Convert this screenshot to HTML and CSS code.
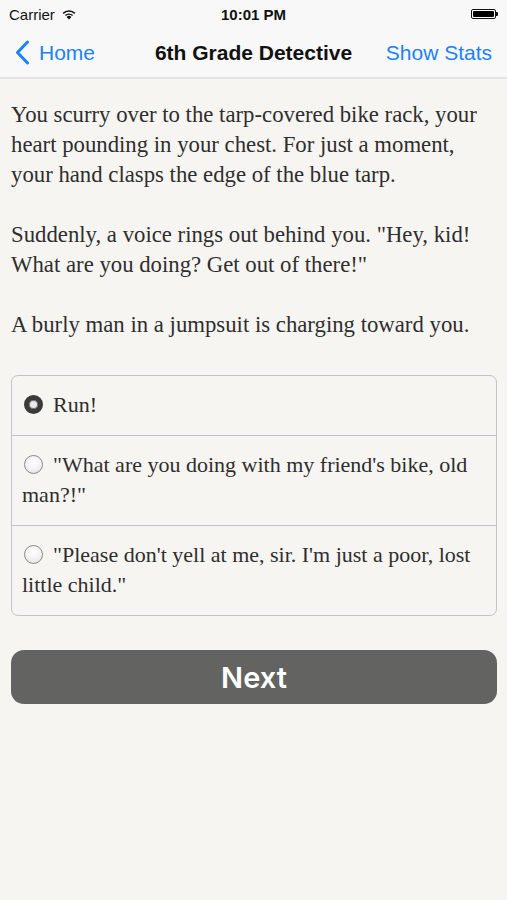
FILE: index.html
```html
<!DOCTYPE html>
<html>
<head>
<meta charset="utf-8">
<link rel="stylesheet" href="styles.css">
</head>
<body>
<div class="top">
  <div class="status">
    <div class="status-left">Carrier
      <svg class="wifi" width="16" height="12" viewBox="0 0 16 12"><path d="M8 11.5 L5.6 8.9 A3.4 3.4 0 0 1 10.4 8.9 Z" fill="#111"/><path d="M3.9 7.1 A5.8 5.8 0 0 1 12.1 7.1 L11.1 8.1 A4.4 4.4 0 0 0 4.9 8.1 Z" fill="#111"/><path d="M1.6 4.8 A9 9 0 0 1 14.4 4.8 L13.3 5.9 A7.5 7.5 0 0 0 2.7 5.9 Z" fill="#111"/></svg>
    </div>
    <div class="status-time">10:01 PM</div>
    <div class="status-right">
      <div class="battery"><div class="battery-fill"></div></div><div class="battery-tip"></div>
    </div>
  </div>
  <div class="nav">
    <div class="nav-back">
      <svg width="15" height="25" viewBox="0 0 15 25"><path d="M12.5 2 L2.5 12.5 L12.5 23" fill="none" stroke="#1a82fb" stroke-width="3" stroke-linecap="round" stroke-linejoin="round"/></svg>
      <span>Home</span>
    </div>
    <div class="nav-title">6th Grade Detective</div>
    <div class="nav-right">Show Stats</div>
  </div>
</div>
<div class="content">
  <p class="story">You scurry over to the tarp-covered bike rack, your heart pounding in your chest. For just a moment, your hand clasps the edge of the blue tarp.</p>
  <p class="story">Suddenly, a voice rings out behind you. "Hey, kid! What are you doing? Get out of there!"</p>
  <p class="story">A burly man in a jumpsuit is charging toward you.</p>
  <div class="choices">
    <div class="choice"><span class="radio checked"></span>Run!</div>
    <div class="choice"><span class="radio"></span>"What are you doing with my friend's bike, old man?!"</div>
    <div class="choice"><span class="radio"></span>"Please don't yell at me, sir. I'm just a poor, lost little child."</div>
  </div>
  <div class="next">Next</div>
</div>
</body>
</html>
```

FILE: styles.css
```css
html, body {
  margin: 0;
  padding: 0;
  background: #f7f5f2;
}
body {
  width: 507px;
  height: 900px;
  font-family: "Liberation Sans", Arial, sans-serif;
}
.top {
  background: #f8f8f8;
  border-bottom: 2px solid #e4e4e4;
}
.status {
  height: 28px;
  display: grid;
  grid-template-columns: 1fr auto 1fr;
  align-items: center;
  padding: 0 9px;
  font-size: 15px;
  color: #111;
}
.status-left {
  display: flex;
  align-items: center;
  gap: 6px;
}
.status-time {
  font-weight: bold;
  font-size: 15px;
}
.status-right {
  display: flex;
  justify-content: flex-end;
  align-items: center;
}
.battery {
  width: 25px;
  height: 10px;
  border: 1px solid #111;
  border-radius: 2px;
  padding: 1px;
  box-sizing: border-box;
  background: #fff;
}
.battery-fill {
  width: 100%;
  height: 100%;
  background: #000;
  border-radius: 1px;
}
.battery-tip {
  width: 2px;
  height: 4px;
  background: #111;
  border-radius: 0 1px 1px 0;
}
.nav {
  height: 49px;
  display: grid;
  grid-template-columns: 1fr auto 1fr;
  align-items: center;
  padding: 0 15px 0 15px;
  font-size: 21px;
}
.nav-back {
  display: flex;
  align-items: center;
  gap: 9px;
  color: #1a82fb;
}
.nav-title {
  font-weight: bold;
  color: #111;
  font-size: 21px;
}
.nav-right {
  color: #1a82fb;
  text-align: right;
}
.content {
  padding: 21px 10px 0 11px;
}
.story {
  margin: 0 0 30px 0;
  font-family: "Liberation Serif", "Times New Roman", serif;
  font-size: 22.75px;
  line-height: 30px;
  color: #2e2e2e;
}
.story:last-of-type {
  margin-bottom: 35px;
}
.choices {
  border: 1px solid #c4c4c4;
  border-radius: 7px;
  font-family: "Liberation Serif", "Times New Roman", serif;
  font-size: 22px;
  line-height: 30px;
  color: #2e2e2e;
}
.choice {
  padding: 14px 8px 15px 10px;
  border-top: 1px solid #c4c4c4;
}
.choice:first-child {
  border-top: none;
}
.radio {
  display: inline-block;
  width: 19px;
  height: 19px;
  border-radius: 50%;
  border: 1px solid #8a8a8a;
  background: radial-gradient(circle at 50% 35%, #ffffff 0%, #f0f0f0 60%, #d8d8d8 100%);
  vertical-align: -2px;
  margin: 0 10px 0 2px;
  box-sizing: border-box;
}
.radio.checked {
  border: 5px solid #3a3a3a;
  background: #eaeaea;
  box-shadow: inset 0 0 0 1px #777;
}
.next {
  margin-top: 34px;
  height: 54px;
  border-radius: 13px;
  background: #636361;
  color: #fff;
  font-family: Inter, "Liberation Sans", sans-serif;
  font-size: 29px;
  font-weight: 600;
  display: flex;
  align-items: center;
  justify-content: center;
}
```
